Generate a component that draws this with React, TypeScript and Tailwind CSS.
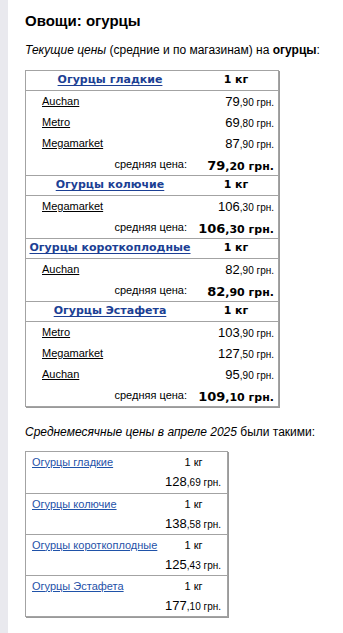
import React from "react";

type Shop = { name: string; whole: string; frac: string };
type Group = { title: string; shops: Shop[]; avgWhole: string; avgFrac: string };

const current: Group[] = [
  {
    title: "Огурцы гладкие",
    shops: [
      { name: "Auchan", whole: "79", frac: ",90" },
      { name: "Metro", whole: "69", frac: ",80" },
      { name: "Megamarket", whole: "87", frac: ",90" },
    ],
    avgWhole: "79",
    avgFrac: ",20",
  },
  {
    title: "Огурцы колючие",
    shops: [{ name: "Megamarket", whole: "106", frac: ",30" }],
    avgWhole: "106",
    avgFrac: ",30",
  },
  {
    title: "Огурцы короткоплодные",
    shops: [{ name: "Auchan", whole: "82", frac: ",90" }],
    avgWhole: "82",
    avgFrac: ",90",
  },
  {
    title: "Огурцы Эстафета",
    shops: [
      { name: "Metro", whole: "103", frac: ",90" },
      { name: "Megamarket", whole: "127", frac: ",50" },
      { name: "Auchan", whole: "95", frac: ",90" },
    ],
    avgWhole: "109",
    avgFrac: ",10",
  },
];

const monthly = [
  { title: "Огурцы гладкие", whole: "128", frac: ",69" },
  { title: "Огурцы колючие", whole: "138", frac: ",58" },
  { title: "Огурцы короткоплодные", whole: "125", frac: ",43" },
  { title: "Огурцы Эстафета", whole: "177", frac: ",10" },
];

const verdana = "font-['DejaVu_Sans',Verdana,sans-serif]";

function PriceTable() {
  return (
    <div className="w-[254px] border border-[#a3a3a3] shadow-[1px_1px_0_#9a9a9a]">
      {current.map((g, i) => (
        <div key={g.title} className={i > 0 ? "border-t border-[#a3a3a3]" : ""}>
          <div className={`flex h-[20px] items-center border-b border-[#a3a3a3] text-[11px] font-bold ${verdana}`}>
            <span className="w-[168px] text-center">
              <a className="text-[#1c3f94] underline underline-offset-2">{g.title}</a>
            </span>
            <span className="flex-1 text-center">1 кг</span>
          </div>
          {g.shops.map((s) => (
            <div key={s.name} className="flex h-[21px] items-center justify-between pl-[16px] pr-[4px]">
              <a className="text-[11px] text-black underline underline-offset-1">{s.name}</a>
              <span className="text-[13px]">
                {s.whole}
                <span className="text-[10px]">{s.frac} грн.</span>
              </span>
            </div>
          ))}
          <div className="flex h-[21px] items-center justify-end pr-[4px]">
            <span className="mr-[5px] text-[11px]">средняя цена:</span>
            <span className={`w-[82px] text-right font-bold ${verdana}`}>
              <span className="text-[13px]">{g.avgWhole}</span>
              <span className="text-[11px]">{g.avgFrac} грн.</span>
            </span>
          </div>
        </div>
      ))}
    </div>
  );
}

function MonthlyTable() {
  return (
    <div className="w-[203px] border border-[#a3a3a3] shadow-[1px_1px_0_#9a9a9a]">
      {monthly.map((m, i) => (
        <div key={m.title} className={`h-[41px] ${i > 0 ? "border-t border-[#a3a3a3]" : ""}`}>
          <div className="flex h-[20px] items-center text-[11px]">
            <span className="w-[134px] pl-[6px]">
              <a className="text-[#1f52a8] underline underline-offset-1">{m.title}</a>
            </span>
            <span className="flex-1 text-center">1 кг</span>
          </div>
          <div className="flex h-[20px] items-center justify-end pr-[6px]">
            <span className="text-[13px]">
              {m.whole}
              <span className="text-[10px]">{m.frac} грн.</span>
            </span>
          </div>
        </div>
      ))}
    </div>
  );
}

export default function App() {
  return (
    <div className="flex min-h-[633px] bg-white font-['Liberation_Sans',Arial,sans-serif] text-black">
      <div className="w-[8px] shrink-0 bg-[#e9e9ee]" />
      <div className="flex-1 pl-[17px] pt-[12px]">
        <h1 className="text-[15px] font-bold leading-[18px]">Овощи: огурцы</h1>
        <p className="mt-[13px] text-[12px] leading-[14px]">
          <i>Текущие цены</i> (средние и по магазинам) на <b>огурцы</b>:
        </p>
        <div className="mt-[13px]">
          <PriceTable />
        </div>
        <p className="mt-[18px] text-[12px] leading-[14px]">
          <i>Среднемесячные цены в апреле 2025</i> были такими:
        </p>
        <div className="mt-[12px]">
          <MonthlyTable />
        </div>
      </div>
    </div>
  );
}
